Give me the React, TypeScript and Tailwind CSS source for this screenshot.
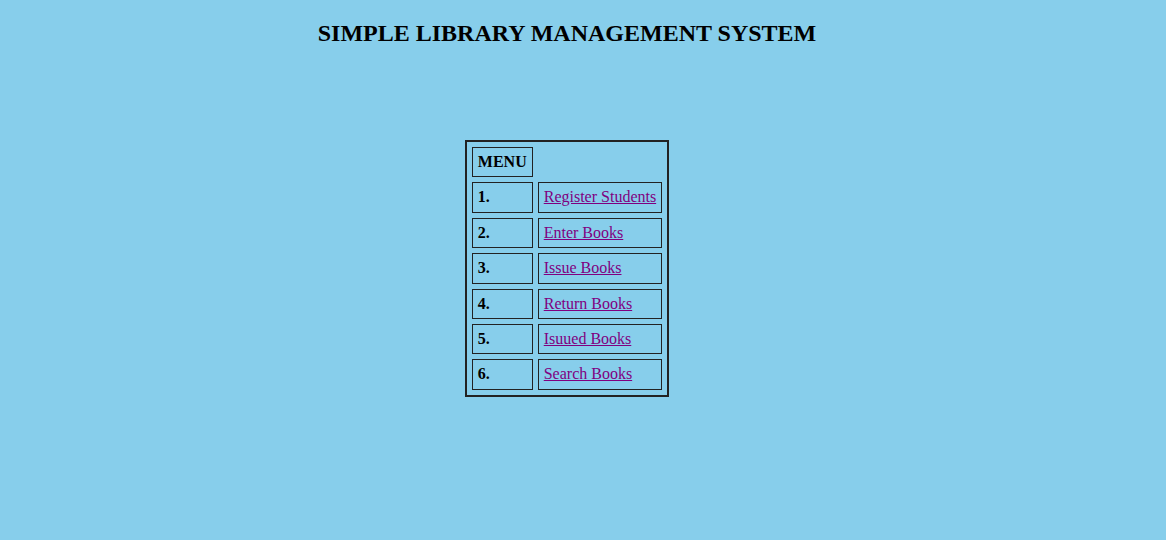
import React from 'react';

const items = [
    { no: '1.', label: 'Register Students' },
    { no: '2.', label: 'Enter Books' },
    { no: '3.', label: 'Issue Books' },
    { no: '4.', label: 'Return Books' },
    { no: '5.', label: 'Isuued Books' },
    { no: '6.', label: 'Search Books' },
];

const App = () => {
    return (
        <div className="min-h-screen w-full bg-[#87CEEB] font-['Liberation_Serif','Times_New_Roman',serif] text-[16px] leading-[normal] text-black">
            <div className="w-[1134px] pt-[20px] text-center">
                <h2 className="text-[24px] font-bold">SIMPLE LIBRARY MANAGEMENT SYSTEM</h2>
                <table className="mx-auto mt-[93px] border-separate border-spacing-[5px] border-2 border-[#222] text-left leading-[18.4px]">
                    <tbody>
                        <tr>
                            <td className="border border-[#222] p-[5px] font-bold">MENU</td>
                        </tr>
                        {items.map(item => (
                            <tr key={item.no}>
                                <td className="border border-[#222] p-[5px] font-bold">{item.no}</td>
                                <td className="border border-[#222] p-[5px]">
                                    <a href="#" className="text-[#800080] underline">{item.label}</a>
                                </td>
                            </tr>
                        ))}
                    </tbody>
                </table>
            </div>
        </div>
    );
};

export default App;
